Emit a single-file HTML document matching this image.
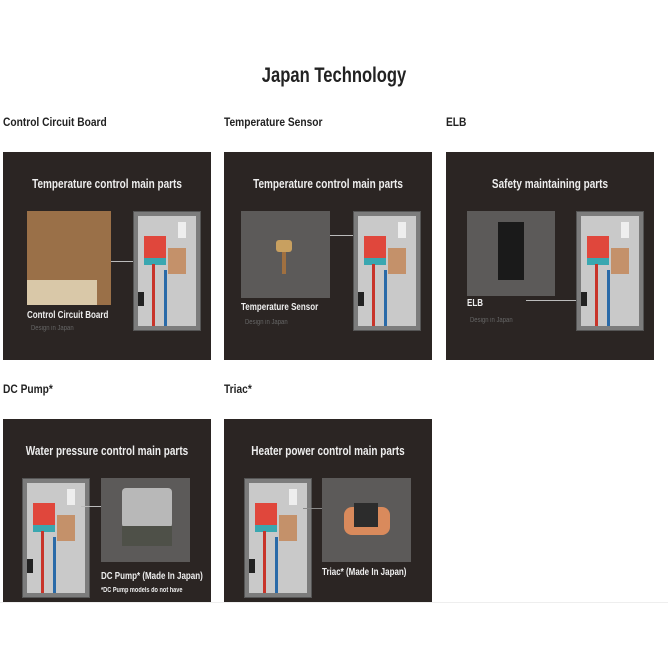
<!DOCTYPE html>
<html><head><style>
body{margin:0;width:668px;height:668px;background:#fff;position:relative;font-family:"Liberation Sans",sans-serif;overflow:hidden}
.h{position:absolute;left:0;width:668px;top:64px;text-align:center;font-size:21px;font-weight:bold;color:#222;transform:scaleX(0.79)}
.lab{position:absolute;font-size:12px;font-weight:bold;color:#222;transform:scaleX(0.85);transform-origin:left;white-space:nowrap}
.card{position:absolute;width:208px;background:#2b2523;overflow:hidden}
.t{position:absolute;left:0;width:100%;text-align:center;color:#eee;font-size:12.5px;font-weight:bold;top:25px;transform:scaleX(0.8);white-space:nowrap}
.img{position:absolute;background:#5c5a59}
.d{position:absolute;width:66px;height:118px;background:#7c7c7c;border:1px solid #555}
.d .in{position:absolute;left:4px;top:4px;right:4px;bottom:4px;background:#c9c9c9}
.d .r{position:absolute;left:10px;top:24px;width:22px;height:28px;background:#e0473c}
.d .b{position:absolute;left:10px;top:46px;width:22px;height:7px;background:#3aa7b0}
.d .p{position:absolute;left:34px;top:36px;width:18px;height:26px;background:#c4916a}
.d .w{position:absolute;left:44px;top:10px;width:8px;height:16px;background:#eee}
.d .pr{position:absolute;left:18px;top:52px;width:3px;height:62px;background:#c8342a}
.d .pb{position:absolute;left:30px;top:58px;width:3px;height:56px;background:#2a6aa8}
.d .bk{position:absolute;left:4px;top:80px;width:6px;height:14px;background:#222}
.cap{position:absolute;color:#eee;font-size:10px;font-weight:bold;transform:scaleX(0.8);transform-origin:left;white-space:nowrap}
.sub{position:absolute;color:#666;font-size:7px;transform:scaleX(0.85);transform-origin:left;white-space:nowrap}
</style></head><body>
<div class="h">Japan Technology</div>
<div class="lab" style="left:3px;top:115px">Control Circuit Board</div>
<div class="lab" style="left:224px;top:115px">Temperature Sensor</div>
<div class="lab" style="left:446px;top:115px">ELB</div>
<div class="lab" style="left:3px;top:382px">DC Pump*</div>
<div class="lab" style="left:224px;top:382px">Triac*</div>

<div class="card" style="left:3px;top:152px;height:208px">
<div class="t">Temperature control main parts</div>
<div class="img" style="left:24px;top:59px;width:84px;height:94px;background:#9a7048"></div>
<div class="img" style="left:24px;top:128px;width:70px;height:25px;background:#d9c8a8"></div>
<div style="position:absolute;left:108px;top:109px;width:22px;height:1px;background:#bbb"></div>
<div class="d" style="left:130px;top:59px"><div class="in"></div><div class="r"></div><div class="b"></div><div class="p"></div><div class="w"></div><div class="pr"></div><div class="pb"></div><div class="bk"></div></div>
<div class="cap" style="left:24px;top:158px">Control Circuit Board</div>
<div class="sub" style="left:28px;top:173px">Design in Japan</div>
</div>

<div class="card" style="left:224px;top:152px;height:208px">
<div class="t">Temperature control main parts</div>
<div class="img" style="left:17px;top:59px;width:89px;height:87px"></div>
<div style="position:absolute;left:52px;top:88px;width:16px;height:12px;background:#c8a060;border-radius:3px"></div>
<div style="position:absolute;left:58px;top:100px;width:4px;height:22px;background:#a07040"></div>
<div style="position:absolute;left:106px;top:83px;width:24px;height:1px;background:#bbb"></div>
<div class="d" style="left:129px;top:59px"><div class="in"></div><div class="r"></div><div class="b"></div><div class="p"></div><div class="w"></div><div class="pr"></div><div class="pb"></div><div class="bk"></div></div>
<div class="cap" style="left:17px;top:150px">Temperature Sensor</div>
<div class="sub" style="left:21px;top:167px">Design in Japan</div>
</div>

<div class="card" style="left:446px;top:152px;height:208px">
<div class="t">Safety maintaining parts</div>
<div class="img" style="left:21px;top:59px;width:88px;height:85px"></div>
<div style="position:absolute;left:52px;top:70px;width:26px;height:58px;background:#1a1a1a"></div>
<div style="position:absolute;left:80px;top:148px;width:50px;height:1px;background:#bbb"></div>
<div class="d" style="left:130px;top:59px"><div class="in"></div><div class="r"></div><div class="b"></div><div class="p"></div><div class="w"></div><div class="pr"></div><div class="pb"></div><div class="bk"></div></div>
<div class="cap" style="left:21px;top:146px">ELB</div>
<div class="sub" style="left:24px;top:165px">Design in Japan</div>
</div>

<div class="card" style="left:3px;top:419px;height:183px">
<div class="t">Water pressure control main parts</div>
<div class="d" style="left:19px;top:59px"><div class="in"></div><div class="r"></div><div class="b"></div><div class="p"></div><div class="w"></div><div class="pr"></div><div class="pb"></div><div class="bk"></div></div>
<div style="position:absolute;left:78px;top:87px;width:20px;height:1px;background:#bbb"></div>
<div class="img" style="left:98px;top:59px;width:89px;height:84px"></div>
<div style="position:absolute;left:119px;top:69px;width:50px;height:40px;background:#b8b8b8;border-radius:4px"></div>
<div style="position:absolute;left:119px;top:107px;width:50px;height:20px;background:#4e5048"></div>
<div class="cap" style="left:98px;top:152px">DC Pump* (Made In Japan)</div>
<div class="cap" style="left:98px;top:168px;font-size:7px">*DC Pump models do not have</div>
</div>

<div class="card" style="left:224px;top:419px;height:183px">
<div class="t">Heater power control main parts</div>
<div class="d" style="left:20px;top:59px"><div class="in"></div><div class="r"></div><div class="b"></div><div class="p"></div><div class="w"></div><div class="pr"></div><div class="pb"></div><div class="bk"></div></div>
<div style="position:absolute;left:79px;top:89px;width:19px;height:1px;background:#888"></div>
<div class="img" style="left:98px;top:59px;width:89px;height:84px"></div>
<div style="position:absolute;left:120px;top:88px;width:46px;height:28px;background:#d98a5c;border-radius:8px"></div>
<div style="position:absolute;left:130px;top:84px;width:24px;height:24px;background:#2c2c2c"></div>
<div class="cap" style="left:98px;top:148px">Triac* (Made In Japan)</div>
</div>
<div style="position:absolute;left:0;top:602px;width:668px;height:1px;background:#eee"></div>
</body></html>
